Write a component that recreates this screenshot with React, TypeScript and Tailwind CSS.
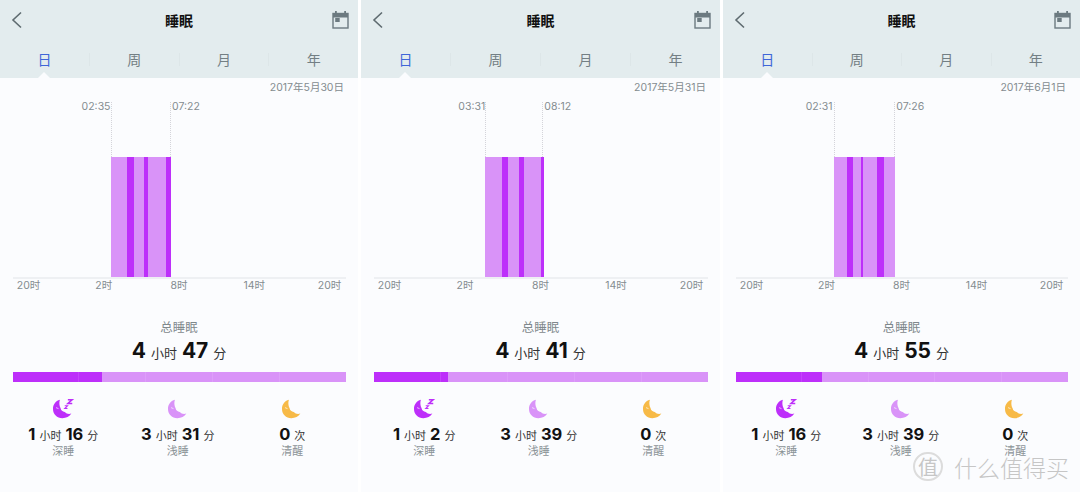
const panels = [
  {
    width: 358,
    date: "2017年5月30日",
    start: "02:35",
    end: "07:22",
    bar: [111, 171],
    deep: [[126.7, 133.5], [144, 148], [165.7, 171]],
    deepPct: 27,
    total: ["4", "47"],
    deepTime: ["1", "16"],
    lightTime: ["3", "31"],
  },
  {
    width: 359,
    date: "2017年5月31日",
    start: "03:31",
    end: "08:12",
    bar: [123.7, 182.3],
    deep: [[140.7, 146.7], [158, 162.3], [180, 182.3]],
    deepPct: 22.2,
    total: ["4", "41"],
    deepTime: ["1", "2"],
    lightTime: ["3", "39"],
  },
  {
    width: 357,
    date: "2017年6月1日",
    start: "02:31",
    end: "07:26",
    bar: [111, 172.3],
    deep: [[123.7, 130.3], [137.7, 140.3], [154.3, 161.3]],
    deepPct: 26.2,
    total: ["4", "55"],
    deepTime: ["1", "16"],
    lightTime: ["3", "39"],
  },
];

const font = { fontFamily: '"Inter", "Noto Sans CJK SC", sans-serif' };

const CalendarIcon = () => (
  <svg width="17" height="18" viewBox="0 0 17 18">
    <rect x="3" y="0" width="1.800" height="3" fill="#6c7a80" />
    <rect x="12.200" y="0" width="1.800" height="3" fill="#6c7a80" />
    <rect x="1" y="2.500" width="15" height="14.500" fill="none" stroke="#6c7a80" strokeWidth="1.400" />
    <rect x="1" y="2.500" width="15" height="4" fill="#6c7a80" />
    <rect x="3.200" y="7" width="4.500" height="4" fill="#6c7a80" />
  </svg>
);

const Moon = ({ color, zzz }: { color: string; zzz?: boolean }) => (
  <svg width="24" height="22" viewBox="0 0 24 22">
    <path
      d="M7.500 1 C2.800 2.300 0 6.200 0 11 C0 16.800 4.500 21 10.200 21 C14.500 21 18 19.300 20 16 C17.200 17 14.600 16.200 12.800 14.300 C10.600 13.800 8.600 12.500 8.300 10.200 C6.800 7.600 6.500 4 7.500 1 Z"
      fill={color}
    />
    <path d="M3.300 9.500 L6 10.600" stroke="#ffffff" strokeWidth="0.900" opacity="0.800" />
    {zzz && (
      <g fill="none" stroke={color}>
        <path d="M16.200 0.800 H21 L16.200 5 H21" strokeWidth="1.600" />
        <path d="M12.800 7.500 H15.800 L12.800 10.500 H15.800" strokeWidth="1.200" />
      </g>
    )}
  </svg>
);

const Amount = ({ parts, units, big, small, gap }: { parts: string[]; units: string[]; big: string; small: string; gap: string }) => (
  <div className={`flex items-baseline justify-center ${gap} text-[#111]`}>
    {parts.map((p, i) => (
      <span key={i} className={`flex items-baseline ${gap}`}>
        <span className={`${big} font-bold`}>{p}</span>
        <span className={`${small} text-[#333]`}>{units[i]}</span>
      </span>
    ))}
  </div>
);

const Stat = ({ icon, parts, units, label }: { icon: React.ReactNode; parts: string[]; units: string[]; label: string }) => (
  <div className="flex w-[114.500px] flex-col items-center">
    <div className="flex h-[23px] w-[24px] items-end justify-start pl-[2px]">{icon}</div>
    <div className="mt-[4px] h-[20px] leading-[20px]">
      <Amount parts={parts} units={units} big="text-[16.500px]" small="text-[11px]" gap="gap-[4px]" />
    </div>
    <div className="text-[11px] leading-[14px] text-[#8b9397]">{label}</div>
  </div>
);

const Panel = ({ p }: { p: (typeof panels)[number] }) => {
  const [x1, x2] = p.bar;
  const barLeft = ((p.bar[0] - 12.500) / 332.500) * 100;
  return (
    <div className="flex h-[492px] shrink-0 flex-col bg-[#fbfcfe]" style={{ width: p.width, ...font }}>
      <div className="bg-[#e3ecee]">
        <div className="flex h-[40px] items-center justify-between pl-[11px] pr-[9px]">
          <div className="w-[15px]">
            <svg width="12" height="18" viewBox="0 0 12 18">
              <path d="M10 1.500 L2 9 L10 16.500" fill="none" stroke="#5f6b70" strokeWidth="1.600" />
            </svg>
          </div>
          <div className="text-[14px] font-bold text-[#111]">睡眠</div>
          <CalendarIcon />
        </div>
        <div className="relative flex h-[38px] items-center">
          {["日", "周", "月", "年"].map((t, i) => (
            <div
              key={t}
              className={`flex h-[13px] flex-1 items-center justify-center text-[14px] ${i === 0 ? "text-[#3f66d8]" : "text-[#737f84]"} ${i < 3 ? "border-r border-[#dde6e8]" : ""}`}
            >
              {t}
            </div>
          ))}
          <div className="absolute bottom-0 left-[38px] h-0 w-0 border-x-[6px] border-b-[6px] border-x-transparent border-b-[#fbfcfe]" />
        </div>
      </div>

      <div className="pr-[14px] pt-[3px] text-right text-[10.500px] leading-[14px] text-[#848c90]">{p.date}</div>

      <div className="relative mx-[12.500px] mt-[7px] h-[182px] shrink-0">
        {/* chart area, x positions come from the data */}
        <div className="absolute text-[10.500px] leading-[14px] text-[#848c90]" style={{ right: 332.500 - (x1 - 12.500) + 1, top: -2 }}>
          {p.start}
        </div>
        <div className="absolute text-[10.500px] leading-[14px] text-[#848c90]" style={{ left: x2 - 12.500 + 1, top: -2 }}>
          {p.end}
        </div>
        <div className="absolute top-0 h-[55px] border-l border-dotted border-[#d4d4da]" style={{ left: x1 - 12.500 }} />
        <div className="absolute top-0 h-[55px] border-l border-dotted border-[#d4d4da]" style={{ left: x2 - 12.500 - 1 }} />
        <div className="absolute top-[55px] flex h-[121px] bg-[#d993f8]" style={{ left: `${barLeft}%`, width: x2 - x1 }}>
          {p.deep.map(([a, b], i) => (
            <div
              key={i}
              className="absolute top-0 h-full bg-[#bd2ffa]"
              style={{ left: a - x1, width: b - a }}
            />
          ))}
        </div>
        <div className="absolute left-0 right-0 top-[175px] h-[1.500px] bg-[#eef0f3]" />
      </div>

      <div className="mx-[16.500px] -mt-[5px] flex justify-between text-[10.500px] leading-[14px] text-[#848c90]">
        {["20时", "2时", "8时", "14时", "20时"].map((t, i) => (
          <div key={i} className="flex w-[24px] justify-center">
            {t}
          </div>
        ))}
      </div>

      <div className="mt-[27px] text-center text-[12.500px] leading-[16px] text-[#7f888c]">总睡眠</div>
      <div className="mt-[1px] h-[28px] leading-[28px]">
        <Amount parts={p.total} units={["小时", "分"]} big="text-[21px]" small="text-[13px]" gap="gap-[5px]" />
      </div>

      <div className="relative mx-[12.500px] mt-[7px] flex h-[9.500px] shrink-0 bg-[#d993f8]">
        <div className="h-full bg-[#bd2ffa]" style={{ width: `${p.deepPct}%` }} />
        <div className="absolute inset-0 flex">
          {[0, 1, 2, 3, 4].map((i) => (
            <div key={i} className={`flex-1 ${i < 4 ? "border-r border-white/10" : ""}`} />
          ))}
        </div>
      </div>

      <div className="mx-[6px] mt-[15px] flex">
        <Stat icon={<Moon color="#bd2ffa" zzz />} parts={p.deepTime} units={["小时", "分"]} label="深睡" />
        <Stat icon={<Moon color="#d993f8" />} parts={p.lightTime} units={["小时", "分"]} label="浅睡" />
        <Stat icon={<Moon color="#f7ba47" />} parts={["0"]} units={["次"]} label="清醒" />
      </div>
    </div>
  );
};

export default function App() {
  return (
    <div className="relative flex h-[492px] w-[1080px] gap-[3px] overflow-hidden bg-white">
      {panels.map((p) => (
        <Panel key={p.date} p={p} />
      ))}
      {/* watermark */}
      <div
        className="absolute left-[913px] top-[452px] flex items-center gap-[11px] text-[#c6c6c6]"
        style={{ fontFamily: '"Noto Sans CJK SC", sans-serif' }}
      >
        <div className="flex h-[29px] w-[30px] items-center justify-center rounded-full border-2 border-[#dcdcdc] text-[20px] leading-none">
          值
        </div>
        <div className="text-[23px] font-light leading-[18px]">什么值得买</div>
      </div>
    </div>
  );
}
